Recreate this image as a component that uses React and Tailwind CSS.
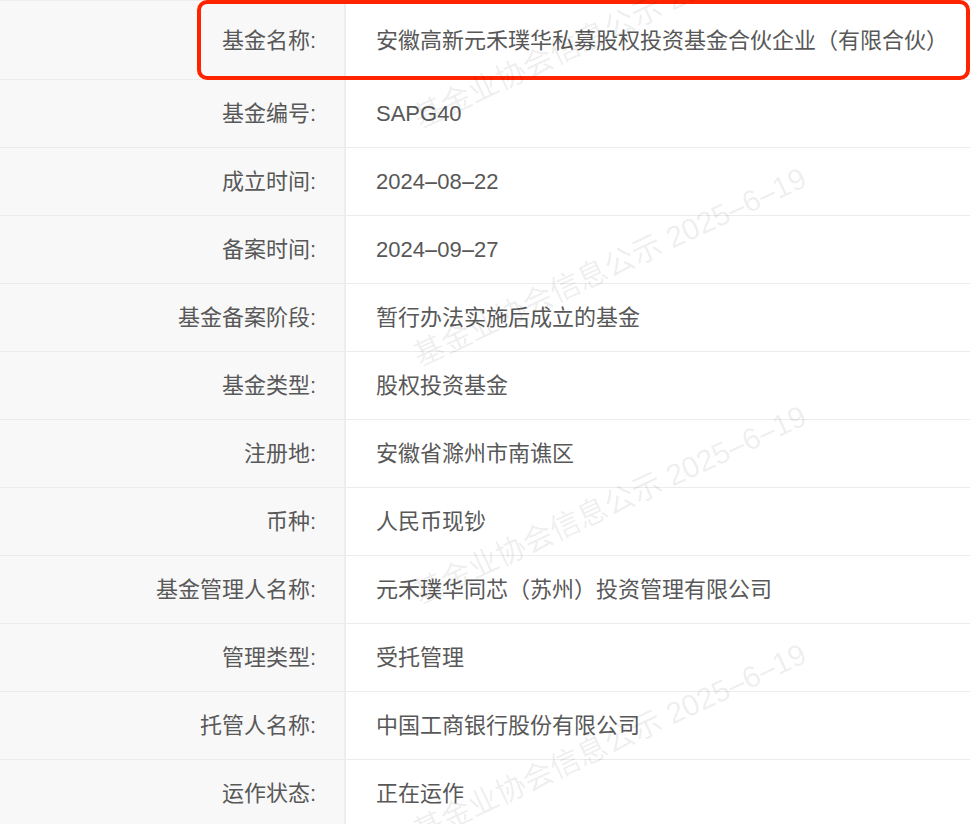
import React from 'react';

const rows = [
  ['基金名称:', '安徽高新元禾璞华私募股权投资基金合伙企业（有限合伙）'],
  ['基金编号:', 'SAPG40'],
  ['成立时间:', '2024-08-22'],
  ['备案时间:', '2024-09-27'],
  ['基金备案阶段:', '暂行办法实施后成立的基金'],
  ['基金类型:', '股权投资基金'],
  ['注册地:', '安徽省滁州市南谯区'],
  ['币种:', '人民币现钞'],
  ['基金管理人名称:', '元禾璞华同芯（苏州）投资管理有限公司'],
  ['管理类型:', '受托管理'],
  ['托管人名称:', '中国工商银行股份有限公司'],
  ['运作状态:', '正在运作'],
];

function WithDashes({ text }) {
  const parts = text.split('-');
  return parts.map((p, i) => (
    <React.Fragment key={i}>
      {i > 0 && <span className="inline-block w-[0.56em] text-center scale-x-[2.2]">-</span>}
      {p}
    </React.Fragment>
  ));
}

const marks = [29, 267, 505, 743];

export default function App() {
  return (
    <div className="relative w-[970px] h-[824px] overflow-hidden bg-white font-['Liberation_Sans','Noto_Sans_CJK_SC',sans-serif] text-[22px] text-[#585858]">
      <div className="border-t border-[#ededed]">
        {rows.map(([label, value], i) => (
          <div
            key={label}
            className={`grid grid-cols-[346px_1fr] border-b border-[#ececec] ${i === 0 ? 'h-[79px]' : 'h-[68px]'}`}
          >
            <div className="flex items-center justify-end pr-[28px] bg-[#f8f8f8] border-r-2 border-[#ededed]">
              {label}
            </div>
            <div className="flex items-center pl-[30px] whitespace-nowrap">
              <WithDashes text={value} />
            </div>
          </div>
        ))}
      </div>

      {/* highlight box */}
      <div className="absolute left-[197px] top-0 w-[773px] h-[80px] border-4 border-[#ff2400] rounded-[10px] pointer-events-none" />

      {/* watermark */}
      {marks.map((y) => (
        <div
          key={y}
          style={{ top: y }}
          className="absolute left-[610px] -translate-x-1/2 -translate-y-1/2 -rotate-[25deg] whitespace-nowrap leading-none text-[30px] text-black/[0.08] pointer-events-none select-none"
        >
          基金业协会信息公示 <WithDashes text="2025-6-19" />
        </div>
      ))}
    </div>
  );
}
